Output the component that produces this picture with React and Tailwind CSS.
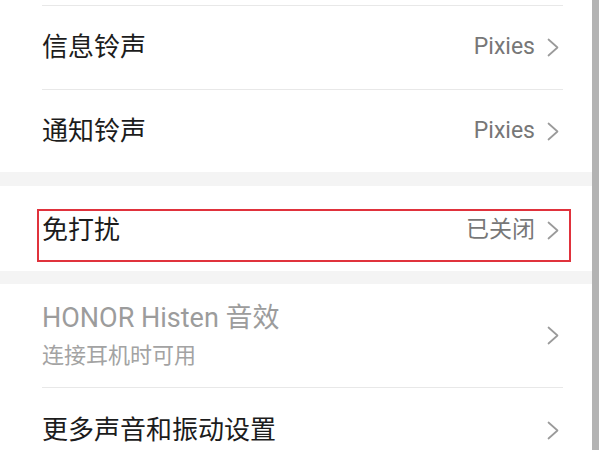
import React from 'react'

function Chevron() {
  return (
    <svg width="12" height="19" viewBox="0 0 12 19" fill="none" className="shrink-0">
      <path d="M1.5 1.5 L10.5 9.5 L1.5 17.5" stroke="#9a9a9a" strokeWidth="1.7" strokeLinecap="round" strokeLinejoin="round" />
    </svg>
  )
}

function Row({ title, value, border = true, height }) {
  return (
    <div className={`ml-[42px] mr-[29px] flex items-center justify-between pr-[4px] ${border ? 'border-b border-[#e8e8e8]' : ''} ${height}`}>
      <span className="text-[26px] text-[#1c1c1c]">{title}</span>
      <div className="flex items-center gap-[12px]">
        {value && <span className="text-[23px] text-[#777777]">{value}</span>}
        <Chevron />
      </div>
    </div>
  )
}

export default function App() {
  return (
    <div className="w-[600px] h-[450px] overflow-hidden bg-white flex" style={{ fontFamily: 'Roboto, "Noto Sans CJK SC", sans-serif' }}>
      <div className="w-[592px] flex flex-col">
        <div className="ml-[42px] mr-[29px] h-[6px] border-b border-[#e8e8e8] shrink-0" />
        <Row title="信息铃声" value="Pixies" height="h-[84px] shrink-0" />
        <Row title="通知铃声" value="Pixies" border={false} height="h-[82px] shrink-0" />
        <div className="h-[14px] bg-[#f4f4f4] shrink-0" />

        <div className="h-[85px] pt-[23px] shrink-0">
          <div className="ml-[37px] mr-[21px] border-2 border-[#e0323c] pl-[3px] pr-[10px] h-[53px]">
            <div className="h-[38px] flex items-center justify-between">
              <span className="text-[26px] text-[#1c1c1c]">免打扰</span>
              <div className="flex items-center gap-[12px]">
                <span className="text-[23px] text-[#777777]">已关闭</span>
                <Chevron />
              </div>
            </div>
          </div>
        </div>
        <div className="h-[13px] bg-[#f4f4f4] shrink-0" />

        <div className="ml-[42px] mr-[29px] pr-[4px] h-[104px] border-b border-[#e8e8e8] flex items-center justify-between shrink-0">
          <div className="flex flex-col">
            <span className="text-[27px] leading-[34px] text-[#9c9c9c]">HONOR Histen 音效</span>
            <span className="text-[22px] leading-[30px] mt-[6px] text-[#a3a3a3]">连接耳机时可用</span>
          </div>
          <Chevron />
        </div>
        <Row title="更多声音和振动设置" border={false} height="h-[84px] shrink-0" />
      </div>
      <div className="w-[7px] h-full bg-[#b3b3b3]" />
      <div className="w-[1px] h-full bg-white" />
    </div>
  )
}
